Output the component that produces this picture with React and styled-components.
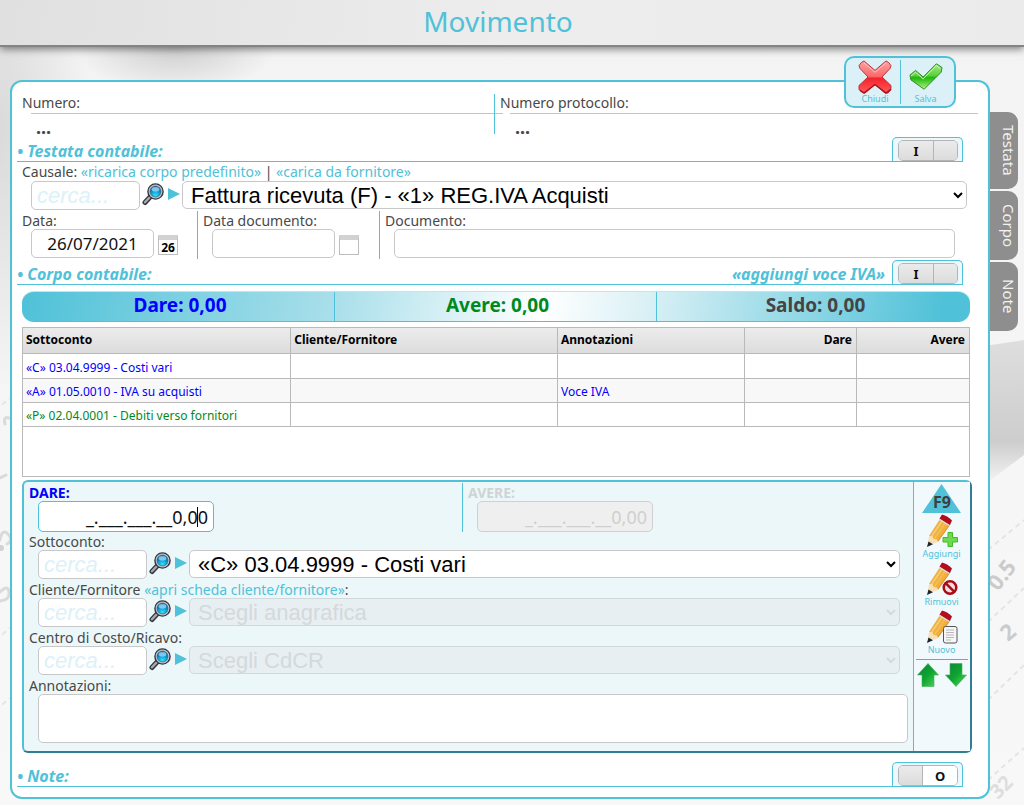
import React, { useState } from 'react';
import styled, { createGlobalStyle } from 'styled-components';

const CYAN = '#4fc1d8';

const GlobalStyle = createGlobalStyle`
  * {
    box-sizing: border-box;
  }
  body {
    background: #f5f5f5;
    color: #484848;
    font-family: 'Noto Sans', 'Open Sans', sans-serif;
    font-size: 14px;
    line-height: 18px;
    margin: 0;
  }
  a {
    color: ${CYAN};
    text-decoration: none;
  }
  button, input, select, textarea {
    font-family: inherit;
    margin: 0;
  }
`;

const Page = styled.div`
  background:
    radial-gradient(ellipse 100px 45px at 175px 48px, #cfcfcf, rgba(207, 207, 207, 0)),
    radial-gradient(ellipse 90px 260px at 0 130px, #dadada, rgba(218, 218, 218, 0)),
    linear-gradient(#f3f3f3, #f8f8f8);
  min-height: 100vh;
  overflow: hidden;
  position: relative;
`;

const Paper = styled.svg`
  height: 485px;
  position: absolute;
  top: 320px;
  width: 40px;
  ${({ $side }) => $side}: 0;
`;

const Header = styled.header`
  background: linear-gradient(100deg, #e0e0e0, #ededed 50%, #ebebeb);
  border-bottom: 2px solid #848484;
  box-shadow: 0 2px 8px rgba(0, 0, 0, 0.5);
  height: 47px;
  padding-right: 28px;
  position: relative;
  text-align: center;
`;

const Title = styled.h1`
  color: ${CYAN};
  font-size: 28px;
  font-weight: 400;
  line-height: 42px;
  margin: 0;
`;

const Body = styled.div`
  align-items: flex-start;
  display: flex;
  padding: 33px 6px 6px 10px;
  position: relative;
`;

const Panel = styled.main`
  background: #fff;
  border: 2px solid ${CYAN};
  border-radius: 12px;
  flex: 1;
  min-width: 0;
  padding: 11px 0 10px;
  position: relative;
`;

const Actions = styled.div`
  background: #dcf1f7;
  border: 2px solid ${CYAN};
  border-radius: 10px;
  display: flex;
  padding: 2px 4px;
  position: absolute;
  right: 32px;
  top: -26px;
`;

const ActionButton = styled.button`
  align-items: center;
  background: none;
  border: 0;
  color: ${CYAN};
  display: flex;
  flex-direction: column;
  font-size: 9px;
  height: 44px;
  line-height: 10px;
  padding: 0;
  width: 50px;
  & + & {
    border-left: 1px solid ${CYAN};
  }
`;

const Tabs = styled.nav`
  display: flex;
  flex-direction: column;
  gap: 2px;
  margin-left: -3px;
  padding-top: 32px;
`;

const Tab = styled.a`
  background: #8e8e8e;
  border-radius: 0 10px 10px 0;
  color: #f2f2f2;
  font-size: 15px;
  line-height: 18px;
  min-height: 69px;
  padding: 13px 0 13px 13px;
  text-align: center;
  writing-mode: vertical-rl;
`;

const Numbers = styled.div`
  display: grid;
  grid-template-columns: 482fr 494fr;
  height: 41px;
  padding-top: 1px;
`;

const NumberCell = styled.div`
  padding-left: ${({ $divided }) => ($divided ? '5px' : '10px')};
  & + & {
    border-left: 1px solid ${CYAN};
  }
`;

const NumberValue = styled.div`
  border-top: 1px solid #c4c4c4;
  font-size: 18px;
  font-weight: 700;
  height: 20px;
  line-height: 26px;
  margin: 1px ${({ $divided }) => ($divided ? '10px' : '-9px')} 0 ${({ $divided }) => ($divided ? '10px' : '9px')};
  padding-left: 5px;
`;

const SectionBar = styled.div`
  align-items: flex-end;
  border-bottom: 1px solid ${CYAN};
  display: flex;
  gap: 7px;
  height: 26px;
  margin: ${({ $top }) => $top || '0px'} 25px 0 5px;
`;

const SectionTitle = styled.h2`
  color: ${CYAN};
  flex: 1;
  font-size: 16px;
  font-style: italic;
  font-weight: 700;
  line-height: 20px;
  margin: 0;
`;

const SectionLink = styled.a`
  font-size: 16px;
  font-style: italic;
  font-weight: 700;
  line-height: 20px;
`;

const ToggleBox = styled.label`
  background: #ecf8fb;
  border: 1px solid ${CYAN};
  border-bottom: 0;
  border-radius: 5px 5px 0 0;
  cursor: pointer;
  display: flex;
  height: 24px;
  padding: 2px 4px 0 5px;
  position: relative;
  width: 71px;
  input {
    height: 1px;
    opacity: 0;
    position: absolute;
    width: 1px;
  }
`;

const ToggleFace = styled.span`
  border: 1px solid #b4b4b4;
  border-radius: 5px;
  color: #111;
  display: flex;
  flex: 1;
  font-size: 13px;
  font-weight: 700;
  height: 21px;
  line-height: 20px;
  overflow: hidden;
  text-align: center;
`;

const ToggleSide = styled.span`
  background: ${({ $lit }) => ($lit ? '#fff' : 'linear-gradient(#ebebeb, #dcdcdc)')};
  flex: ${({ $wide }) => ($wide ? 35 : 24)};
  & + & {
    border-left: 1px solid #b4b4b4;
  }
`;

const Field = styled.div`
  padding: ${({ $pad }) => $pad || '0px'};
  min-width: 0;
`;

const Label = styled.label`
  color: ${({ $color }) => $color || 'inherit'};
  font-weight: ${({ $bold }) => ($bold ? 700 : 400)};
`;

const Caption = styled.div`
  height: 18px;
  white-space: nowrap;
`;

const LowCaption = styled(Caption)`
  line-height: 20px;
`;

const Controls = styled.div`
  align-items: flex-start;
  display: flex;
  height: 30px;
  padding-left: 9px;
`;

const TextBox = styled.input`
  background: #fff;
  border: 1px solid #c8c8c8;
  border-radius: 5px;
  color: #111;
  font-size: 17px;
  height: 29px;
  min-width: 0;
  padding: 0 5px;
  text-align: ${({ $align }) => $align || 'left'};
  width: ${({ $width }) => $width || '100%'};
`;

const SearchBox = styled(TextBox)`
  font-family: 'Liberation Sans', Arial, sans-serif;
  font-size: 22px;
  font-style: italic;
  width: 109px;
  &::placeholder {
    color: #dcf1f8;
    opacity: 1;
  }
`;

const SearchButton = styled.button`
  background: none;
  border: 0;
  display: flex;
  height: 24px;
  margin: 1px 3px 0 1px;
  padding: 0;
  width: 24px;
`;

const Arrow = styled.span`
  border: 6px solid transparent;
  border-left: 12px solid ${CYAN};
  border-right: 0;
  height: 0;
  margin: 7px 2px 0 0;
  width: 0;
`;

const Picker = styled.select`
  background: #fff;
  border: 1px solid #c8c8c8;
  border-radius: 5px;
  color: #000;
  flex: 1;
  font-family: 'Liberation Sans', Arial, sans-serif;
  font-size: 22px;
  height: 28px;
  min-width: 0;
  padding: 0 0 0 4px;
  &:disabled {
    background: #e8eff2;
    border-color: #d2d8da;
    color: #d4d9db;
    opacity: 1;
  }
`;

const Dates = styled.div`
  display: grid;
  grid-template-columns: 185px 182px 1fr;
  padding-right: 33px;
`;

const DateCell = styled.div`
  border-left: ${({ $first }) => ($first ? '0' : `1px solid ${CYAN}`)};
  padding-left: ${({ $first }) => ($first ? '10px' : '5px')};
`;

const Calendar = styled.button`
  background: #fff;
  border: 1px solid #bdbdbd;
  border-top: 5px solid #d2d2d2;
  color: #000;
  font-size: 12px;
  font-weight: 700;
  height: 20px;
  line-height: 15px;
  margin: 6px 0 0 4px;
  padding: 0;
  width: 20px;
`;

const Totals = styled.div`
  background: linear-gradient(100deg, ${CYAN}, #a9dfea 33%, #fff 55%, #d9f0f5 66%, ${CYAN} 97%);
  border-bottom: 1px solid ${CYAN};
  border-top: 1px solid #bfe6ee;
  border-radius: 12px;
  display: grid;
  grid-template-columns: 312fr 322fr 314fr;
  height: 31px;
  margin: 6px 18px 0 10px;
  overflow: hidden;
`;

const Total = styled.div`
  color: ${({ $color }) => $color};
  font-size: 19px;
  font-weight: 700;
  line-height: 27px;
  padding-left: 4px;
  text-align: center;
  & + & {
    border-left: 1px solid ${CYAN};
  }
`;

const Grid = styled.div`
  background: #fff;
  border: 1px solid #b9b9b9;
  height: 150px;
  margin: 5px 18px 0 10px;
`;

const Table = styled.table`
  border-collapse: collapse;
  color: #000;
  font-size: 12px;
  table-layout: fixed;
  width: 100%;
`;

const Th = styled.th`
  background: linear-gradient(#ececec, #dcdcdc);
  border-bottom: 1px solid #b9b9b9;
  font-size: 12px;
  height: 25px;
  padding: 0 4px 0 3px;
  text-align: ${({ $right }) => ($right ? 'right' : 'left')};
  width: ${({ $width }) => $width};
  & + & {
    border-left: 1px solid #b9b9b9;
  }
`;

const Td = styled.td`
  border-bottom: 1px solid #b9b9b9;
  height: 25px;
  padding: 4px 4px 0 3px;
  text-align: ${({ $right }) => ($right ? 'right' : 'left')};
  & + & {
    border-left: 1px solid #b9b9b9;
  }
`;

const Tr = styled.tr`
  color: ${({ $color }) => $color};
  &:nth-child(even) {
    background: #f8f8f8;
  }
  &:not(:first-child) ${Td} {
    height: 24px;
  }
`;

const Editor = styled.section`
  background: #ecf7fa;
  border: 2px solid;
  border-color: ${CYAN} #2f7f90 #2f7f90 ${CYAN};
  border-radius: 6px;
  display: flex;
  margin: 3px 16px 0 10px;
`;

const EditorForm = styled.div`
  flex: 1;
  min-width: 0;
  padding: 1px 0 8px;
`;

const EditorTools = styled.div`
  align-items: center;
  background: #f1f9fc;
  border-left: 1px solid ${CYAN};
  display: flex;
  flex-direction: column;
  padding: 2px 1px 2px 0;
  width: 57px;
`;

const Amounts = styled.div`
  display: grid;
  grid-template-columns: 438fr 451fr;
  height: 49px;
`;

const AmountCell = styled.div`
  padding-left: 5px;
  & + & {
    border-left: 1px solid ${CYAN};
  }
`;

const AmountBox = styled.div`
  margin-left: 9px;
  position: relative;
  width: 176px;
  ${TextBox} {
    border-color: ${({ $off }) => ($off ? '#d0d0d0' : CYAN)};
    font-size: 18px;
    height: 31px;
  }
  ${TextBox}:disabled {
    background: #efefef;
    color: #cfcfcf;
  }
`;

const Caret = styled.i`
  background: #000;
  height: 20px;
  position: absolute;
  right: 16px;
  top: 6px;
  width: 1px;
`;

const Notes = styled.textarea`
  background: #fff;
  border: 1px solid #c8c8c8;
  border-radius: 5px;
  display: block;
  height: 49px;
  resize: none;
  width: 100%;
`;

const ToolButton = styled.button`
  align-items: center;
  background: none;
  border: 0;
  color: ${CYAN};
  display: flex;
  flex-direction: column;
  font-size: 9px;
  height: 48px;
  line-height: 12px;
  padding: 1px 0 0;
  width: 50px;
`;

const Moves = styled.div`
  border-top: 1px solid #999;
  display: flex;
  gap: 6px;
  justify-content: center;
  margin-top: 2px;
  padding-top: 3px;
  width: 52px;
`;

const MoveButton = styled.button`
  background: none;
  border: 0;
  display: flex;
  padding: 0;
`;

const CrossIcon = () => (
  <svg width="34" height="34" viewBox="0 0 34 36" preserveAspectRatio="none">
    <defs>
      <linearGradient id="red" x1="0" y1="0" x2="0" y2="1">
        <stop offset="0" stopColor="#ffa3a3" />
        <stop offset=".48" stopColor="#f96a6a" />
        <stop offset=".54" stopColor="#f5222c" />
        <stop offset="1" stopColor="#ff5a5a" />
      </linearGradient>
    </defs>
    <path
      d="M6 1 17 11 28 1Q31 2 33 6L32 9 24 18 33 27Q34 32 30 35L27 35 17 26 7 35Q2 34 1 31L1 27 10 18 2 9 1 6Q3 2 6 1Z"
      fill="url(#red)"
      stroke="#b8323a"
    />
    <path d="M6 3 17 13 28 3" fill="none" stroke="#ffc4c4" />
    <path d="M2 32 6 35 17 26 28 35 33 31" fill="none" stroke="#a8121a" strokeWidth="1.5" />
  </svg>
);

const CheckIcon = () => (
  <svg width="34" height="34" viewBox="0 0 36 36">
    <defs>
      <linearGradient id="green" x1="0" y1="0" x2="0" y2="1">
        <stop offset="0" stopColor="#a6ea8b" />
        <stop offset=".45" stopColor="#5fd040" />
        <stop offset=".55" stopColor="#1fb80c" />
        <stop offset="1" stopColor="#b4f28a" />
      </linearGradient>
    </defs>
    <path
      d="M1 16 7 11 15 18 29 4 35 8 34 13 16 31 2 21Z"
      fill="url(#green)"
      stroke="#278a1c"
      strokeLinejoin="round"
    />
    <path d="M2 17 7 13 15 20 29 6 33 9" fill="none" stroke="#d3f7c2" />
  </svg>
);

const SearchIcon = () => (
  <svg width="24" height="24" viewBox="0 0 24 24">
    <defs>
      <radialGradient id="lens" cx=".5" cy=".85" r=".8">
        <stop offset="0" stopColor="#2fe4f5" />
        <stop offset=".6" stopColor="#0892cf" />
        <stop offset="1" stopColor="#0b5d9e" />
      </radialGradient>
    </defs>
    <path d="M10 14 4 20.5" stroke="#33363c" strokeWidth="5" strokeLinecap="round" />
    <path d="M9 15 4 20.3" stroke="#a9abb0" strokeWidth="2.4" strokeLinecap="round" />
    <circle cx="14.5" cy="9.5" r="7.6" fill="#c9ccd6" stroke="#33363c" strokeWidth="1.4" />
    <circle cx="14.5" cy="9.5" r="5.5" fill="url(#lens)" stroke="#356" strokeWidth=".6" />
    <ellipse cx="14.5" cy="7.2" rx="3.8" ry="2.3" fill="#a8dcf5" opacity=".75" />
  </svg>
);

const PencilIcon = ({ children }) => (
  <svg width="32" height="34" viewBox="0 0 32 34">
    <path d="M3 22 14 5 24 11 12 28Z" fill="#f0b040" />
    <path d="M5.5 22.5 16.5 6.5" stroke="#f8cb70" strokeWidth="2" />
    <path d="M8.5 24.5 19.5 8.5" stroke="#f5be58" strokeWidth="1.5" />
    <path d="M11.5 27.5 23.5 11" stroke="#d5942c" />
    <path d="M3 22 6 22 8 25 11 25.5 12 28 1.5 32Z" fill="#f8e0b6" />
    <path d="M2.500 27.5 7 30.3 1 33Z" fill="#1d2530" />
    <path d="M13 6 14.5 3.5 24.5 9.5 23 12Z" fill="#e0dad6" />
    <path d="M13.5 4.5 16 .5Q22 2 26 6.5L24 11Z" fill="#b20d1c" />
    {children}
  </svg>
);

const AddMark = () => (
  <path
    d="M22 18.5h4.5v5h5v4.5h-5v4.5h-4.5v-4.5h-5v-4.5h5Z"
    fill="#6edb4c"
    stroke="#45b82d"
    strokeLinejoin="round"
  />
);

const BanMark = () => (
  <g fill="#f3dede" stroke="#a80c16" strokeWidth="2.5">
    <circle cx="24" cy="25.5" r="6.3" />
    <path d="M19.6 21.1 28.4 29.9" />
  </g>
);

const SheetMark = () => (
  <g stroke="#555">
    <rect x="17.5" y="16.5" width="13.5" height="16.5" rx="2" fill="#f6f6f6" />
    <path d="M20 20h8M20 22.5h8M20 25h8M20 27.5h8M20 30h5" stroke="#aaa" strokeWidth=".8" />
  </g>
);

const F9Icon = () => (
  <svg width="39" height="29" viewBox="0 0 39 29">
    <path d="M19.5 0 39 29H0Z" fill={CYAN} />
    <text x="20" y="24" textAnchor="middle" fontSize="16" fontWeight="700" fill="#404040">
      F9
    </text>
  </svg>
);

const MoveIcon = ({ down }) => (
  <svg width="22" height="24" viewBox="0 0 22 24">
    <defs>
      <linearGradient id="move" x1="0" y1="0" x2="1" y2="1">
        <stop offset="0" stopColor="#16803a" />
        <stop offset=".5" stopColor="#0ba52f" />
        <stop offset="1" stopColor="#5cd65f" />
      </linearGradient>
    </defs>
    <path
      d={down ? 'M5 .5H17V12H21.5L11 23.5.5 12H5Z' : 'M11 .5 21.5 12H17V23.5H5V12H.5Z'}
      fill="url(#move)"
      stroke="#3fae58"
      strokeWidth=".6"
    />
  </svg>
);

const Toggle = ({ name, initial }) => {
  const [on, setOn] = useState(initial);
  return (
    <ToggleBox>
      <input
        type="checkbox"
        aria-label={name}
        checked={on}
        onChange={e => setOn(e.target.checked)}
      />
      <ToggleFace>
        <ToggleSide $wide={on}>{on && 'I'}</ToggleSide>
        <ToggleSide $wide={!on} $lit={!on}>
          {!on && 'O'}
        </ToggleSide>
      </ToggleFace>
    </ToggleBox>
  );
};

const SearchPicker = ({ id, value, disabled }) => (
  <Controls>
    <SearchBox placeholder="cerca..." aria-label={`Cerca ${id}`} />
    <SearchButton type="button" aria-label="Cerca">
      <SearchIcon />
    </SearchButton>
    <Arrow />
    <Picker id={id} disabled={disabled}>
      <option>{value}</option>
    </Picker>
  </Controls>
);

const columns = [
  { title: 'Sottoconto', width: '28.3%' },
  { title: 'Cliente/Fornitore', width: '28.2%' },
  { title: 'Annotazioni', width: '19.8%' },
  { title: 'Dare', width: '11.8%', right: true },
  { title: 'Avere', width: '11.9%', right: true },
];

const rows = [
  { color: '#00f', cells: ['«C» 03.04.9999 - Costi vari', '', '', '', ''] },
  { color: '#00f', cells: ['«A» 01.05.0010 - IVA su acquisti', '', 'Voce IVA', '', ''] },
  { color: '#008a1e', cells: ['«P» 02.04.0001 - Debiti verso fornitori', '', '', '', ''] },
];

const Backdrop = () => (
  <>
    <Paper $side="left" viewBox="0 0 40 485" aria-hidden="true">
      <g stroke="#e6e6e6" strokeWidth="2" strokeDasharray="5 4">
        <path d="M-5 90 40 55M-5 320 40 285M-5 390 40 355" />
      </g>
      <g fill="none" stroke="#dadada" strokeWidth="3" strokeLinecap="round">
        <path d="M5 104Q3 96 9 98M0 158 6 155M0 220Q2 208 8 214T7 224M0 272Q8 264 9 272T0 281" />
      </g>
      <circle cx="1" cy="228" r="3" fill="#d2d2d2" />
    </Paper>
    <Paper $side="right" viewBox="0 0 40 485" aria-hidden="true">
      <defs>
        <linearGradient id="shade" x1="0" y1="0" x2="0" y2="1">
          <stop offset="0" stopColor="#dedede" />
          <stop offset=".7" stopColor="#cdcdcd" />
          <stop offset="1" stopColor="#cdcdcd" stopOpacity="0" />
        </linearGradient>
      </defs>
      <path d="M0 26 40 20V135L0 165Z" fill="url(#shade)" />
      <g stroke="#e4e4e4" strokeWidth="2" strokeDasharray="5 4">
        <path d="M4 230 40 200M4 302 40 268M4 380 40 345M4 460 40 428" />
      </g>
      <g fill="#cbcbcb" fontSize="22" fontWeight="700">
        <text transform="translate(14 272) rotate(-52)">0.5</text>
        <text transform="translate(24 322) rotate(-40)">2</text>
        <text transform="translate(14 480) rotate(-45)" fill="#dedede" fontSize="20">
          32
        </text>
      </g>
    </Paper>
  </>
);

const App = () => (
  <Page>
    <GlobalStyle />
    <Backdrop />
    <Header>
      <Title>Movimento</Title>
    </Header>
    <Body>
      <Panel>
        <Actions>
          <ActionButton type="button">
            <CrossIcon />
            Chiudi
          </ActionButton>
          <ActionButton type="button">
            <CheckIcon />
            Salva
          </ActionButton>
        </Actions>

        <Numbers>
          <NumberCell>
            <Caption>Numero:</Caption>
            <NumberValue>...</NumberValue>
          </NumberCell>
          <NumberCell $divided>
            <Caption>Numero protocollo:</Caption>
            <NumberValue $divided>...</NumberValue>
          </NumberCell>
        </Numbers>

        <SectionBar id="testata" $top="2px">
          <SectionTitle>• Testata contabile:</SectionTitle>
          <Toggle name="Testata contabile" initial />
        </SectionBar>
        <Field $pad="1px 21px 0 10px">
          <Caption>
            <Label htmlFor="causale">Causale:</Label> <a href="#corpo">«ricarica corpo predefinito»</a>{' '}
            | <a href="#fornitore">«carica da fornitore»</a>
          </Caption>
          <SearchPicker id="causale" value="Fattura ricevuta (F) - «1» REG.IVA Acquisti" />
        </Field>
        <Dates>
          <DateCell $first>
            <LowCaption>
              <Label htmlFor="data">Data:</Label>
            </LowCaption>
            <Controls>
              <TextBox id="data" $width="123px" $align="center" defaultValue="26/07/2021" />
              <Calendar type="button">26</Calendar>
            </Controls>
          </DateCell>
          <DateCell>
            <LowCaption>
              <Label htmlFor="data-documento">Data documento:</Label>
            </LowCaption>
            <Controls>
              <TextBox id="data-documento" $width="123px" $align="center" />
              <Calendar type="button" aria-label="Calendario" />
            </Controls>
          </DateCell>
          <DateCell>
            <LowCaption>
              <Label htmlFor="documento">Documento:</Label>
            </LowCaption>
            <Controls>
              <TextBox id="documento" />
            </Controls>
          </DateCell>
        </Dates>

        <SectionBar id="corpo">
          <SectionTitle>• Corpo contabile:</SectionTitle>
          <SectionLink href="#iva">«aggiungi voce IVA»</SectionLink>
          <Toggle name="Corpo contabile" initial />
        </SectionBar>
        <Totals>
          <Total $color="#00f">Dare: 0,00</Total>
          <Total $color="#008a1e">Avere: 0,00</Total>
          <Total $color="#444">Saldo: 0,00</Total>
        </Totals>
        <Grid>
          <Table>
            <thead>
              <tr>
                {columns.map(col => (
                  <Th key={col.title} $width={col.width} $right={col.right}>
                    {col.title}
                  </Th>
                ))}
              </tr>
            </thead>
            <tbody>
              {rows.map(row => (
                <Tr key={row.cells[0]} $color={row.color}>
                  {row.cells.map((cell, i) => (
                    <Td key={columns[i].title} $right={columns[i].right}>
                      {cell}
                    </Td>
                  ))}
                </Tr>
              ))}
            </tbody>
          </Table>
        </Grid>

        <Editor>
          <EditorForm>
            <Amounts>
              <AmountCell>
                <LowCaption>
                  <Label htmlFor="dare" $bold $color="#00f">
                    DARE:
                  </Label>
                </LowCaption>
                <AmountBox>
                  <TextBox id="dare" $align="right" defaultValue="_.___.___.__0,00" />
                  <Caret />
                </AmountBox>
              </AmountCell>
              <AmountCell>
                <LowCaption>
                  <Label htmlFor="avere" $bold $color="#cfd3d5">
                    AVERE:
                  </Label>
                </LowCaption>
                <AmountBox $off>
                  <TextBox id="avere" $align="right" defaultValue="_.___.___.__0,00" disabled />
                </AmountBox>
              </AmountCell>
            </Amounts>
            <Field $pad="0 13px 0 5px">
              <LowCaption>
                <Label htmlFor="sottoconto">Sottoconto:</Label>
              </LowCaption>
              <SearchPicker id="sottoconto" value="«C» 03.04.9999 - Costi vari" />
              <LowCaption>
                <Label htmlFor="cliente">Cliente/Fornitore</Label>{' '}
                <a href="#scheda">«apri scheda cliente/fornitore»</a>:
              </LowCaption>
              <SearchPicker id="cliente" value="Scegli anagrafica" disabled />
              <LowCaption>
                <Label htmlFor="centro">Centro di Costo/Ricavo:</Label>
              </LowCaption>
              <SearchPicker id="centro" value="Scegli CdCR" disabled />
            </Field>
            <Field $pad="0 5px">
              <LowCaption>
                <Label htmlFor="annotazioni">Annotazioni:</Label>
              </LowCaption>
              <Field $pad="0 0 0 9px">
                <Notes id="annotazioni" />
              </Field>
            </Field>
          </EditorForm>
          <EditorTools>
            <F9Icon />
            <ToolButton type="button">
              <PencilIcon>
                <AddMark />
              </PencilIcon>
              Aggiungi
            </ToolButton>
            <ToolButton type="button">
              <PencilIcon>
                <BanMark />
              </PencilIcon>
              Rimuovi
            </ToolButton>
            <ToolButton type="button">
              <PencilIcon>
                <SheetMark />
              </PencilIcon>
              Nuovo
            </ToolButton>
            <Moves>
              <MoveButton type="button" aria-label="Sposta su">
                <MoveIcon />
              </MoveButton>
              <MoveButton type="button" aria-label="Sposta giù">
                <MoveIcon down />
              </MoveButton>
            </Moves>
          </EditorTools>
        </Editor>

        <SectionBar id="note" $top="8px">
          <SectionTitle>• Note:</SectionTitle>
          <Toggle name="Note" initial={false} />
        </SectionBar>
      </Panel>
      <Tabs>
        <Tab href="#testata">Testata</Tab>
        <Tab href="#corpo">Corpo</Tab>
        <Tab href="#note">Note</Tab>
      </Tabs>
    </Body>
  </Page>
);

export default App;
